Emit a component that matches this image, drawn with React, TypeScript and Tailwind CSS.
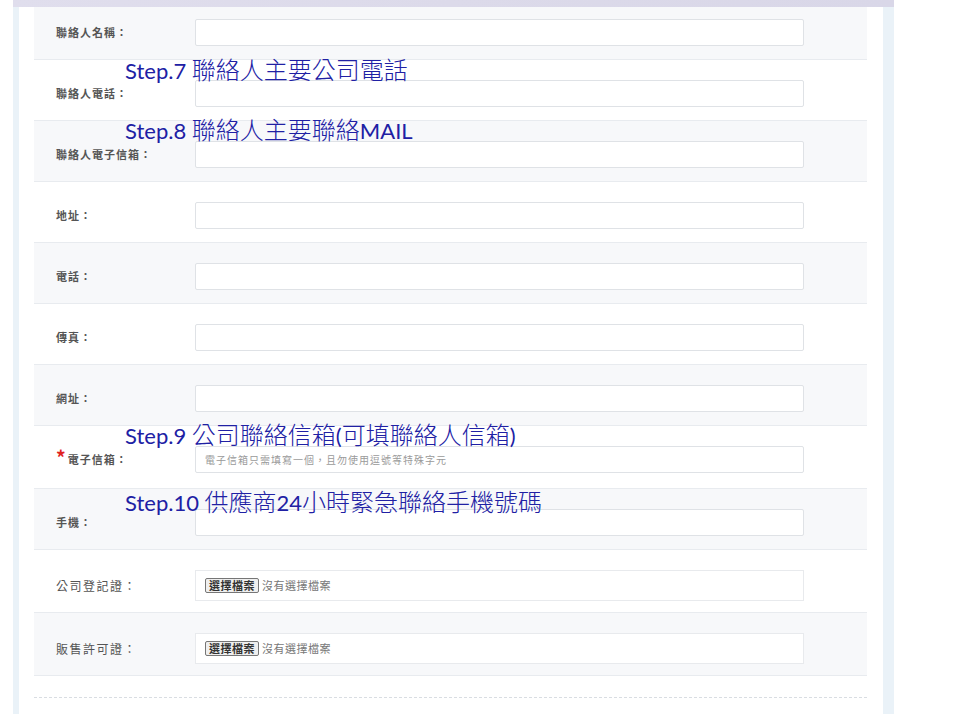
import React from "react";

type Field = {
  label: string;
  kind?: "text" | "file";
  required?: boolean;
  placeholder?: string;
  height: string;
  bg: string;
};

const fields: Field[] = [
  { label: "聯絡人名稱：", height: "h-[61px]", bg: "bg-[#f7f8fa]" },
  { label: "聯絡人電話：", height: "h-[61px]", bg: "bg-white" },
  { label: "聯絡人電子信箱：", height: "h-[61px]", bg: "bg-[#f7f8fa]" },
  { label: "地址：", height: "h-[61px]", bg: "bg-white" },
  { label: "電話：", height: "h-[61px]", bg: "bg-[#f7f8fa]" },
  { label: "傳真：", height: "h-[61px]", bg: "bg-white" },
  { label: "網址：", height: "h-[61px]", bg: "bg-[#f7f8fa]" },
  {
    label: "電子信箱：",
    required: true,
    placeholder: "電子信箱只需填寫一個，且勿使用逗號等特殊字元",
    height: "h-[63px]",
    bg: "bg-white",
  },
  { label: "手機：", height: "h-[61px]", bg: "bg-[#f7f8fa]" },
  { label: "公司登記證：", kind: "file", height: "h-[63px]", bg: "bg-white" },
  { label: "販售許可證：", kind: "file", height: "h-[63px]", bg: "bg-[#f7f8fa]" },
];

const cjk = { fontFamily: '"Noto Sans CJK TC", "Noto Sans", sans-serif' };

function FormRow({ field }: { field: Field }) {
  const isFile = field.kind === "file";
  return (
    <div className={`${field.height} ${field.bg} flex items-start pt-[20px] border-b border-[#e8ebef]`}>
      <div
        className={`w-[161px] pl-[22px] flex items-center ${isFile ? "h-[31px]" : "h-[27px]"}`}
      >
        {field.required && (
          <span className="text-[#e0231f] text-[19px] leading-none font-bold -mt-[6px] mr-[2px]">*</span>
        )}
        <span
          className={`text-[#555] whitespace-nowrap ${
            isFile ? "text-[12px] tracking-[1.5px]" : "text-[11px] font-bold tracking-[1px]"
          }`}
        >
          {field.label}
        </span>
      </div>
      {isFile ? (
        <div className="w-[609px] h-[31px] bg-white border border-[#e8eaed] flex items-center pl-[9px] gap-[3px]">
          <span className="h-[15px] px-[3px] border border-[#767676] rounded-[2px] bg-[#efefef] text-[11px] leading-[13px] font-bold text-[#333] tracking-[0.5px]">
            選擇檔案
          </span>
          <span className="text-[11px] text-[#777] tracking-[0.5px]">沒有選擇檔案</span>
        </div>
      ) : (
        <div className="w-[609px] h-[27px] bg-white border border-[#dfe2e6] rounded-[2px] flex items-center pl-[9px]">
          {field.placeholder && (
            <span className="text-[10px] text-[#9a9a9a] tracking-[1px] whitespace-nowrap">
              {field.placeholder}
            </span>
          )}
        </div>
      )}
    </div>
  );
}

function Note({ top, children }: { top: string; children: React.ReactNode }) {
  return (
    <div className={`absolute left-[125px] ${top} whitespace-nowrap leading-none text-[#2020a4]`}>
      {children}
    </div>
  );
}

const L = ({ children }: { children: React.ReactNode }) => (
  <span className="text-[22px]" style={{ fontFamily: "Lato, \"Open Sans\", sans-serif" }}>
    {children}
  </span>
);
const C = ({ children }: { children: React.ReactNode }) => (
  <span className="text-[24px] font-light" style={cjk}>
    {children}
  </span>
);

export default function App() {
  return (
    <div className="relative w-[960px] h-[720px] bg-white overflow-hidden" style={cjk}>
      <div className="ml-[13px] w-[881px] h-[714px] flex">
        <div className="w-[6px] bg-[#eaf2f8]" />
        <div className="flex-1 bg-white pl-[15px] pr-[16px]">
          <div className="-mt-[1px] flex flex-col">
            {fields.map((f) => (
              <FormRow key={f.label} field={f} />
            ))}
          </div>
          <div className="mt-[21px] border-t border-dashed border-[#d9dde2]" />
        </div>
        <div className="w-[11px] bg-[#eaf2f8]" />
      </div>

      {/* blurred banner image peeking in at the top */}
      <div className="absolute left-[13px] top-0 w-[881px] h-[7px] bg-gradient-to-r from-[#e0deed] via-[#dcdaea] to-[#d9d7e8]" />

      <Note top="top-[57px]">
        <L>Step.7 </L>
        <C>聯絡人主要公司電話</C>
      </Note>
      <Note top="top-[117px]">
        <L>Step.8 </L>
        <C>聯絡人主要聯絡</C>
        <L>MAIL</L>
      </Note>
      <Note top="top-[422px]">
        <L>Step.9 </L>
        <C>公司聯絡信箱</C>
        <L>(</L>
        <C>可填聯絡人信箱</C>
        <L>)</L>
      </Note>
      <Note top="top-[489px]">
        <L>Step.10 </L>
        <C>供應商</C>
        <L>24</L>
        <C>小時緊急聯絡手機號碼</C>
      </Note>
    </div>
  );
}
